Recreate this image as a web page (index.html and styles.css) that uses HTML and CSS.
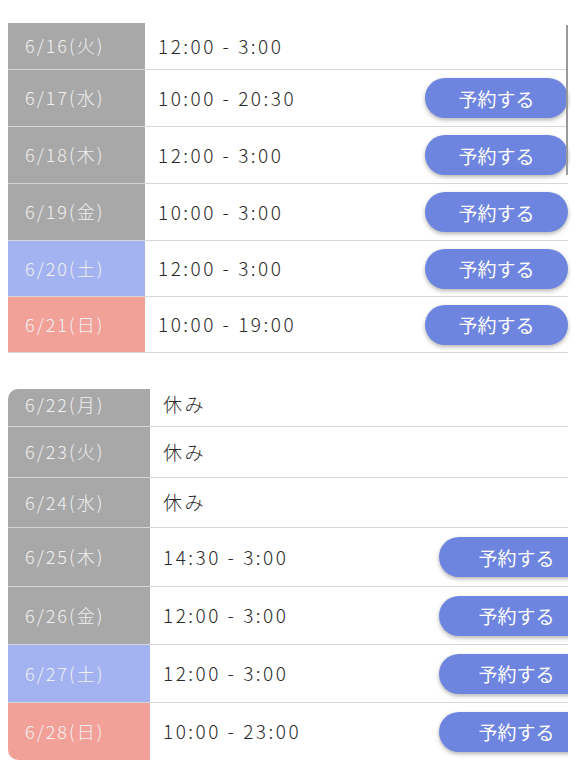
FILE: index.html
```html
<!DOCTYPE html>
<html lang="ja">
<head>
  <meta charset="UTF-8" />
  <title>予約</title>
  <link rel="stylesheet" href="styles.css">
</head>
<body>

<div class="week week-a">
  <div class="bar"></div>
  <div class="row h47"><div class="date">6/16(火)</div><div class="time">12:00 - 3:00</div></div>
  <div class="row"><div class="date">6/17(水)</div><div class="time">10:00 - 20:30</div><button class="reserve">予約する</button></div>
  <div class="row"><div class="date">6/18(木)</div><div class="time">12:00 - 3:00</div><button class="reserve">予約する</button></div>
  <div class="row"><div class="date">6/19(金)</div><div class="time">10:00 - 3:00</div><button class="reserve">予約する</button></div>
  <div class="row h56"><div class="date sat">6/20(土)</div><div class="time">12:00 - 3:00</div><button class="reserve">予約する</button></div>
  <div class="row h56"><div class="date sun">6/21(日)</div><div class="time">10:00 - 19:00</div><button class="reserve">予約する</button></div>
</div>

<div class="week week-b">
  <div class="row h38"><div class="date">6/22(月)</div><div class="time">休み</div></div>
  <div class="row h51"><div class="date">6/23(火)</div><div class="time">休み</div></div>
  <div class="row h50"><div class="date">6/24(水)</div><div class="time">休み</div></div>
  <div class="row h59"><div class="date">6/25(木)</div><div class="time">14:30 - 3:00</div><button class="reserve">予約する</button></div>
  <div class="row h58"><div class="date">6/26(金)</div><div class="time">12:00 - 3:00</div><button class="reserve">予約する</button></div>
  <div class="row h58"><div class="date sat">6/27(土)</div><div class="time">12:00 - 3:00</div><button class="reserve">予約する</button></div>
  <div class="row h57 last"><div class="date sun">6/28(日)</div><div class="time">10:00 - 23:00</div><button class="reserve">予約する</button></div>
</div>

</body>
</html>
```

FILE: styles.css
```css
* {
  margin: 0;
  padding: 0;
  box-sizing: border-box;
}
body {
  background: #fff;
  font-family: "Noto Sans CJK JP", "Noto Sans", sans-serif;
  color: #2a2a2a;
  padding: 23px 8px 0;
}
.week {
  position: relative;
  width: 560px;
}
.week-b {
  margin-top: 36px;
  overflow: hidden;
}
.bar {
  position: absolute;
  right: 0;
  top: 2px;
  width: 2px;
  height: 150px;
  background: #9a9a9a;
  z-index: 2;
}
.row {
  display: flex;
  align-items: center;
  height: 57px;
  border-bottom: 1px solid #d6d6d6;
}
.h38 { height: 38px; }
.h47 { height: 47px; }
.h50 { height: 50px; }
.h51 { height: 51px; }
.h56 { height: 56px; }
.h57 { height: 57px; }
.h58 { height: 58px; }
.h59 { height: 59px; }
.date {
  align-self: stretch;
  display: flex;
  align-items: center;
  width: 137px;
  padding-left: 17px;
  padding-bottom: 2px;
  background: #a8a8a8;
  color: #f0f0f0;
  font-size: 18px;
  font-weight: 300;
  letter-spacing: 2px;
}
.date.sat { background: #a3b3f1; }
.date.sun { background: #f2a199; }
.time {
  flex: 1;
  padding-left: 13px;
  padding-bottom: 2px;
  font-size: 19px;
  font-weight: 300;
  letter-spacing: 2.5px;
}
.reserve {
  width: 143px;
  height: 40px;
  border: none;
  border-radius: 20px;
  background: #6e85df;
  color: #fff;
  font-family: inherit;
  font-size: 19px;
  box-shadow: 0 2px 4px rgba(0, 0, 0, 0.3);
}
.week-b .date {
  width: 142px;
}
.week-b .h38 .date {
  border-top-left-radius: 10px;
  padding-bottom: 8px;
}
.week-b .h38 .time {
  padding-bottom: 8px;
}
.week-b .last .date {
  border-bottom-left-radius: 10px;
}
.week-b .last {
  border-bottom: none;
}
.week-b .reserve {
  width: 155px;
  margin-right: -26px;
}
```
